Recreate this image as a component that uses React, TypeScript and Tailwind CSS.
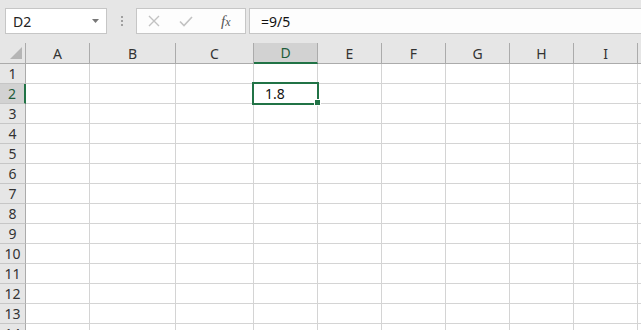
import React from 'react';

const COLS = [
  { label: 'A', w: 'w-[64px]' },
  { label: 'B', w: 'w-[86px]' },
  { label: 'C', w: 'w-[78px]' },
  { label: 'D', w: 'w-[64px]' },
  { label: 'E', w: 'w-[64px]' },
  { label: 'F', w: 'w-[64px]' },
  { label: 'G', w: 'w-[64px]' },
  { label: 'H', w: 'w-[64px]' },
  { label: 'I', w: 'w-[64px]' },
  { label: 'J', w: 'w-[64px]' },
];

const ROWS = Array.from({ length: 14 }, (_, i) => i + 1);

const FormulaBar: React.FC = () => (
  <div className="h-[43px] pt-[8px] flex items-start">
    {/* Name box */}
    <div className="ml-[5px] w-[102px] h-[26px] bg-white border border-[#c6c6c6] flex items-center justify-between pl-[7px] pr-[7px]">
      <span className="text-[14px] text-[#222]">D2</span>
      <svg width="7" height="4" viewBox="0 0 7 4">
        <path d="M0 0 L7 0 L3.5 4 Z" fill="#777" />
      </svg>
    </div>

    {/* grip dots */}
    <div className="ml-[14px] mt-[8px] flex flex-col gap-[2px]">
      <span className="w-[2px] h-[2px] bg-[#a0a0a0]" />
      <span className="w-[2px] h-[2px] bg-[#a0a0a0]" />
      <span className="w-[2px] h-[2px] bg-[#a0a0a0]" />
    </div>

    {/* cancel / enter / fx */}
    <div className="ml-[13px] w-[110px] h-[26px] bg-[#fdfdfd] border border-[#c6c6c6] flex items-center">
      <svg className="ml-[11px]" width="12" height="12" viewBox="0 0 12 12">
        <path d="M1 1 L11 11 M11 1 L1 11" stroke="#c2c2c2" strokeWidth="1.4" fill="none" />
      </svg>
      <svg className="ml-[19px]" width="14" height="11" viewBox="0 0 14 11">
        <path d="M1 5.5 L5 9.5 L13 1" stroke="#c2c2c2" strokeWidth="1.6" fill="none" />
      </svg>
      <span className="ml-[28px] font-['Liberation_Serif',serif] italic text-[15px] leading-none text-[#555]">
        f<span className="text-[12px]">x</span>
      </span>
    </div>

    {/* formula input */}
    <div className="ml-[3px] flex-1 h-[26px] bg-[#fdfdfd] border-y border-l border-[#c6c6c6] flex items-center pl-[11px]">
      <span className="text-[14px] text-[#111]">=9/5</span>
    </div>
  </div>
);

const App: React.FC = () => {
  return (
    <div className="relative w-[641px] h-[330px] overflow-hidden bg-[#e6e6e6] font-['Noto_Sans','Open_Sans',sans-serif]">
      <FormulaBar />

      {/* Grid */}
      <div className="flex flex-col w-max">
        {/* column headers */}
        <div className="flex h-[21px]">
          <div className="w-[26px] h-full border-r border-b border-[#ababab] relative">
            <svg className="absolute left-[10px] top-[4px]" width="12" height="12" viewBox="0 0 12 12">
              <path d="M12 0 L12 12 L0 12 Z" fill="#b5b5b5" />
            </svg>
          </div>
          {COLS.map((c) =>
            c.label === 'D' ? (
              <div
                key={c.label}
                className={`${c.w} h-full bg-[#d2d2d2] border-r border-[#ababab] border-b-2 border-b-[#217346] flex items-center justify-center text-[14px] text-[#1e5c3a]`}
              >
                {c.label}
              </div>
            ) : (
              <div
                key={c.label}
                className={`${c.w} h-full border-r border-b border-[#ababab] flex items-center justify-center text-[14px] text-[#333]`}
              >
                {c.label}
              </div>
            )
          )}
        </div>

        {/* rows */}
        {ROWS.map((r) => (
          <div key={r} className="flex h-[20px]">
            {r === 2 ? (
              <div className="w-[26px] h-full bg-[#d2d2d2] border-r-2 border-r-[#217346] border-b border-b-[#c6c6c6] flex items-center justify-center text-[14px] text-[#1e5c3a]">
                {r}
              </div>
            ) : (
              <div className="w-[26px] h-full border-r border-r-[#ababab] border-b border-b-[#c6c6c6] flex items-center justify-center text-[14px] text-[#333]">
                {r}
              </div>
            )}
            {COLS.map((c) => (
              <div
                key={c.label}
                className={`${c.w} h-full bg-white border-r border-b border-[#d4d4d4] flex items-center text-[14px] text-[#111]`}
              >
                {r === 2 && c.label === 'D' ? <span className="pl-[11px]">1.8</span> : null}
              </div>
            ))}
          </div>
        ))}
      </div>

      {/* active cell outline */}
      <div className="absolute left-[252px] top-[82px] w-[67px] h-[23px] border-2 border-[#217346] pointer-events-none" />
      <div className="absolute left-[314px] top-[99px] w-[7px] h-[7px] bg-[#217346] border border-white" />
    </div>
  );
};

export default App;
